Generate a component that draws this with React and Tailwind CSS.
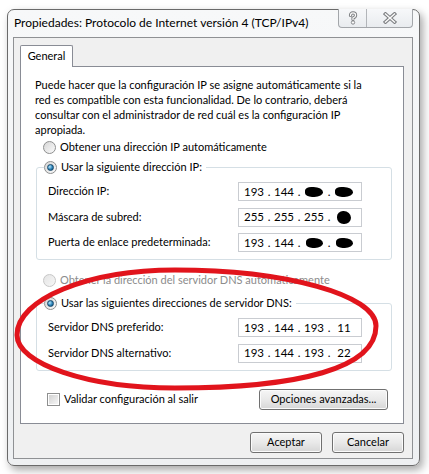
const font = { fontFamily: 'Lato, "Liberation Sans", Arial, sans-serif' };

function Radio({ checked, disabled }) {
  if (disabled) {
    return (
      <span className="flex h-[13px] w-[13px] shrink-0 items-center justify-center rounded-full border border-[#c7c7c7] bg-gradient-to-br from-[#e4e4e4] to-[#f7f7f7]" />
    );
  }
  return (
    <span className="flex h-[13px] w-[13px] shrink-0 items-center justify-center rounded-full border border-[#8e8f8f] bg-gradient-to-br from-[#d6d6d6] to-[#fbfbfb]">
      {checked && (
        <span className="h-[7px] w-[7px] rounded-full border border-[#17486a] bg-[radial-gradient(circle_at_35%_35%,#b9e6fb,#2b83b8_55%,#0e4a75)]" />
      )}
    </span>
  );
}

function Blob({ w = 18, big }) {
  return (
    <span
      className={
        big
          ? "inline-block h-[13px] w-[14px] rounded-[45%_55%_50%_50%] bg-black"
          : "inline-block h-[10px] rounded-[40%_60%_55%_45%] bg-black"
      }
      style={big ? undefined : { width: w }}
    />
  );
}

function IpBox({ parts }) {
  return (
    <div className="flex h-[19px] w-[124px] items-center border border-[#c9ccd1] bg-white pl-[5px] text-[11.5px] text-black">
      {parts.map((p, i) => (
        <div key={i} className="flex items-center">
          <span className="flex w-[20px] justify-center">{p}</span>
          {i < 3 && <span className="flex w-[10px] justify-center">.</span>}
        </div>
      ))}
    </div>
  );
}

function Row({ label, parts }) {
  return (
    <div className="flex h-[19px] items-center">
      <span className="w-[201px] whitespace-nowrap pl-[11px]">{label}</span>
      <IpBox parts={parts} />
    </div>
  );
}

function WinButton({ children, className }) {
  return (
    <button
      className={`flex h-[21px] items-center justify-center rounded-[3px] border border-[#707070] bg-gradient-to-b from-[#f6f6f6] via-[#e9e9e9] to-[#d6d6d6] text-[11px] text-black shadow-[inset_0_0_0_1px_#fbfbfb] ${className}`}
    >
      {children}
    </button>
  );
}

function Group({ legend, children }) {
  return (
    <fieldset className="ml-[15px] w-[356px] rounded-[3px] border border-[#d5dfe5] pb-[7px]">
      <legend className="ml-[7px] flex h-[16px] items-center gap-[4px] bg-white pr-[4px]">
        <Radio checked />
        <span>{legend}</span>
      </legend>
      <div className="mt-[7px] flex flex-col gap-[6.5px]">{children}</div>
    </fieldset>
  );
}

export default function App() {
  return (
    <div className="relative h-[474px] w-[429px] overflow-hidden bg-white pl-[7px] pt-[9px] text-[11px] text-black" style={font}>
      <div className="flex h-[457px] w-[413px] flex-col rounded-[7px] border border-[#6a6a6a] bg-gradient-to-b from-[#f7f8f9] to-[#eef0f2] shadow-[3px_4px_8px_rgba(0,0,0,0.35)]">
        {/* title bar */}
        <div className="flex h-[27px] items-start justify-between">
          <span className="whitespace-nowrap pl-[6px] pt-[5px] text-[12px] leading-[16px]">
            Propiedades: Protocolo de Internet versión 4 (TCP/IPv4)
          </span>
          <div className="-mt-px mr-[6px] flex h-[19px] w-[75px] shrink-0 rounded-b-[4px] border border-t-0 border-[#a3a6aa] bg-gradient-to-b from-[#f7f8fa] to-[#e9ecef]">
            <div className="flex w-[28px] items-center justify-center border-r border-[#b2b5b9]">
              <svg width="10" height="14" viewBox="0 0 10 14">
                <path d="M2.5 4.5 Q2.5 1.8 5 1.8 Q7.6 1.8 7.6 4.3 Q7.6 6 5 7 L5 8.6" fill="none" stroke="#7d7f82" strokeWidth="3.2" strokeLinecap="round" />
                <path d="M2.5 4.5 Q2.5 1.8 5 1.8 Q7.6 1.8 7.6 4.3 Q7.6 6 5 7 L5 8.6" fill="none" stroke="#fafafa" strokeWidth="1.3" strokeLinecap="round" />
                <circle cx="5" cy="11.5" r="1.7" fill="#fafafa" stroke="#7d7f82" strokeWidth="0.9" />
              </svg>
            </div>
            <div className="flex flex-1 items-center justify-center">
              <svg width="14" height="12" viewBox="0 0 14 12">
                <path d="M2.5 2 L11.5 10 M11.5 2 L2.5 10" fill="none" stroke="#7d7f82" strokeWidth="3.6" strokeLinecap="square" />
                <path d="M2.5 2 L11.5 10 M11.5 2 L2.5 10" fill="none" stroke="#fafafa" strokeWidth="1.5" strokeLinecap="square" />
              </svg>
            </div>
          </div>
        </div>

        {/* client area */}
        <div className="ml-[5px] h-[422px] w-[400px] border border-[#8f9194] bg-[#f0f0f0] pl-[6px] pt-[7px]">
          <div className="w-[384px]">
            <div className="relative z-10 -mb-px flex h-[22px] w-[53px] items-center justify-center rounded-t-[2px] border border-b-0 border-[#898c95] bg-white">
              General
            </div>
            <div className="h-[358px] border border-[#898c95] bg-white">
              <p className="whitespace-nowrap pl-[14px] pt-[10px] leading-[15px]">
                Puede hacer que la configuración IP se asigne automáticamente si la
                <br />
                red es compatible con esta funcionalidad. De lo contrario, deberá
                <br />
                consultar con el administrador de red cuál es la configuración IP
                <br />
                apropiada.
              </p>

              <div className="ml-[22px] mt-[2px] flex h-[16px] items-center gap-[4px]">
                <Radio />
                <span>Obtener una dirección IP automáticamente</span>
              </div>

              <div className="mt-[4px]">
                <Group legend="Usar la siguiente dirección IP:">
                  <Row label="Dirección IP:" parts={["193", "144", <Blob key="a" w={18} />, <Blob key="b" w={18} />]} />
                  <Row label="Máscara de subred:" parts={["255", "255", "255", <Blob key="c" big />]} />
                  <Row label="Puerta de enlace predeterminada:" parts={["193", "144", <Blob key="d" w={17} />, <Blob key="e" w={17} />]} />
                </Group>
              </div>

              <div className="ml-[22px] mt-[12px] flex h-[16px] items-center gap-[4px] text-[#8c8c8c]">
                <Radio disabled />
                <span>Obtener la dirección del servidor DNS automáticamente</span>
              </div>

              <div className="mt-[7px]">
                <Group legend="Usar las siguientes direcciones de servidor DNS:">
                  <Row label="Servidor DNS preferido:" parts={["193", "144", "193", "11"]} />
                  <Row label="Servidor DNS alternativo:" parts={["193", "144", "193", "22"]} />
                </Group>
              </div>

              <div className="mt-[18px] flex items-center justify-between pl-[26px] pr-[15px]">
                <div className="flex items-center gap-[4px]">
                  <span className="flex h-[13px] w-[13px] items-center justify-center border border-[#8e8f8f] bg-white">
                    <span className="h-[9px] w-[9px] bg-gradient-to-br from-[#d2d2d2] to-[#f6f6f6]" />
                  </span>
                  <span>Validar configuración al salir</span>
                </div>
                <WinButton className="w-[129px]">Opciones avanzadas...</WinButton>
              </div>
            </div>

            <div className="mt-[8px] flex justify-end gap-[10px]">
              <WinButton className="w-[72px]">Aceptar</WinButton>
              <WinButton className="w-[72px]">Cancelar</WinButton>
            </div>
          </div>
        </div>
      </div>

      {/* hand-drawn red ellipse */}
      <svg className="pointer-events-none absolute inset-0" width="429" height="474" viewBox="0 0 429 474">
        <path
          d="M17 335 C17 299 88 270 175 270 C286 270 376 295 376 326 C376 368 300 388 175 388 C88 388 17 364 17 335 Z"
          fill="none"
          stroke="#e1141c"
          strokeWidth="5"
        />
      </svg>
    </div>
  );
}
